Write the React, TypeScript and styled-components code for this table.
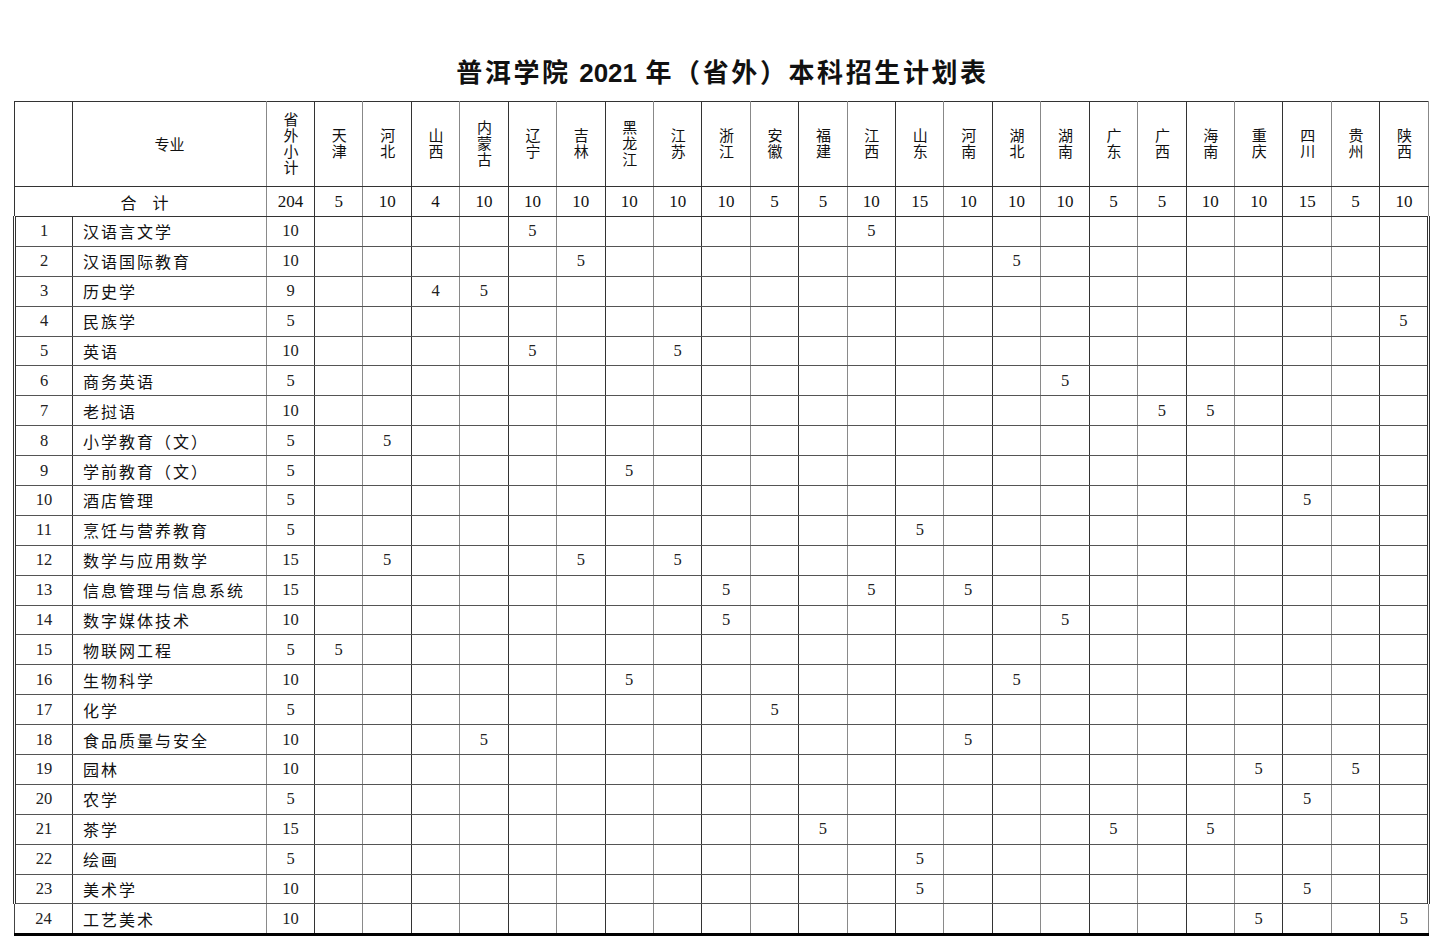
import React from 'react';
import styled, { createGlobalStyle } from 'styled-components';

const GlobalStyle = createGlobalStyle`
  html, body {
    margin: 0;
    padding: 0;
    background: #ffffff;
  }
`;

const provinces = [
  '天津', '河北', '山西', '内蒙古', '辽宁', '吉林', '黑龙江', '江苏', '浙江', '安徽', '福建', '江西',
  '山东', '河南', '湖北', '湖南', '广东', '广西', '海南', '重庆', '四川', '贵州', '陕西',
];

const totals = [5, 10, 4, 10, 10, 10, 10, 10, 10, 5, 5, 10, 15, 10, 10, 10, 5, 5, 10, 10, 15, 5, 10];

// 专业, 小计, { 省份: 人数 }
const rows: [string, number, Record<string, number>][] = [
  ['汉语言文学', 10, { 辽宁: 5, 江西: 5 }],
  ['汉语国际教育', 10, { 吉林: 5, 湖北: 5 }],
  ['历史学', 9, { 山西: 4, 内蒙古: 5 }],
  ['民族学', 5, { 陕西: 5 }],
  ['英语', 10, { 辽宁: 5, 江苏: 5 }],
  ['商务英语', 5, { 湖南: 5 }],
  ['老挝语', 10, { 广西: 5, 海南: 5 }],
  ['小学教育（文）', 5, { 河北: 5 }],
  ['学前教育（文）', 5, { 黑龙江: 5 }],
  ['酒店管理', 5, { 四川: 5 }],
  ['烹饪与营养教育', 5, { 山东: 5 }],
  ['数学与应用数学', 15, { 河北: 5, 吉林: 5, 江苏: 5 }],
  ['信息管理与信息系统', 15, { 浙江: 5, 江西: 5, 河南: 5 }],
  ['数字媒体技术', 10, { 浙江: 5, 湖南: 5 }],
  ['物联网工程', 5, { 天津: 5 }],
  ['生物科学', 10, { 黑龙江: 5, 湖北: 5 }],
  ['化学', 5, { 安徽: 5 }],
  ['食品质量与安全', 10, { 内蒙古: 5, 河南: 5 }],
  ['园林', 10, { 重庆: 5, 贵州: 5 }],
  ['农学', 5, { 四川: 5 }],
  ['茶学', 15, { 福建: 5, 广东: 5, 海南: 5 }],
  ['绘画', 5, { 山东: 5 }],
  ['美术学', 10, { 山东: 5, 四川: 5 }],
  ['工艺美术', 10, { 重庆: 5, 陕西: 5 }],
];

const cjk = `"Noto Sans CJK SC", "Noto Sans", sans-serif`;
const serif = `"Liberation Serif", "DejaVu Serif", "Noto Sans CJK SC", serif`;

const Page = styled.div`
  width: 1443px;
  padding-top: 52px;
`;

const Title = styled.h1`
  margin: 0 0 12px 0;
  height: 37px;
  text-align: center;
  font-family: ${cjk};
  font-weight: 700;
  font-size: 26px;
  line-height: 37px;
  letter-spacing: 2.6px;
  color: #111;
  padding-left: 2px;
`;

const Num = styled.span`
  font-family: "Liberation Sans", "Open Sans", sans-serif;
  font-weight: 700;
  letter-spacing: 0;
`;

const Table = styled.table`
  margin-left: 13px;
  width: 1415px;
  table-layout: fixed;
  border-collapse: collapse;
  color: #111;
`;

const HeadCell = styled.th<{ $light?: boolean }>`
  height: 84px;
  padding: 0;
  border: 1px solid #333;
  border-right-color: ${({ $light }) => ($light ? '#888' : '#333')};
  font-family: ${cjk};
  font-weight: 400;
  font-size: 15px;
  line-height: 16px;
  text-align: center;
  vertical-align: middle;
`;

// 竖排的表头文字
const Vertical = styled.span`
  display: inline-block;
  writing-mode: vertical-rl;
  text-orientation: upright;
  font-size: 15px;
  line-height: 16px;
  letter-spacing: 1px;
  padding-top: 1px;
`;

const TotalCell = styled.td<{ $light?: boolean }>`
  height: 29px;
  padding: 0;
  border: 1px solid #333;
  border-right-color: ${({ $light }) => ($light ? '#888' : '#333')};
  text-align: center;
  font-family: ${serif};
  font-size: 17px;
`;

const TotalLabel = styled(TotalCell)`
  font-family: ${cjk};
  font-size: 16px;
  padding-left: 8px;
`;

const Cell = styled.td<{ $light?: boolean; $last?: boolean; $edge?: 'left' | 'right' }>`
  height: 28.9px;
  padding: 0;
  border: 1px solid #444;
  border-right-color: ${({ $light }) => ($light ? '#8a8a8a' : '#333')};
  border-bottom: ${({ $last }) => ($last ? '3px solid #000' : '1px solid #555')};
  ${({ $edge }) => ($edge === 'left' ? 'border-left: 3px double #333;' : '')}
  ${({ $edge }) => ($edge === 'right' ? 'border-right: 3px double #333;' : '')}
  text-align: center;
  font-family: ${serif};
  font-size: 16.5px;
  color: #222;
`;

const MajorCell = styled(Cell)`
  text-align: left;
  padding-left: 10px;
  font-family: ${cjk};
  font-size: 16px;
  letter-spacing: 2px;
  color: #111;
  white-space: nowrap;
`;

const App: React.FC = () => {
  return (
    <Page>
      <GlobalStyle />
      <Title>
        普洱学院 <Num>2021</Num> 年（省外）本科招生计划表
      </Title>
      <Table>
        <colgroup>
          <col style={{ width: 58 }} />
          <col style={{ width: 194 }} />
          <col style={{ width: 48 }} />
          {provinces.map((p) => (
            <col key={p} style={{ width: 48.43 }} />
          ))}
        </colgroup>
        <thead>
          <tr>
            <HeadCell />
            <HeadCell $light>专业</HeadCell>
            <HeadCell>
              <Vertical>省外小计</Vertical>
            </HeadCell>
            {provinces.map((p, i) => (
              <HeadCell key={p} $light={i % 2 === 0}>
                <Vertical>{p}</Vertical>
              </HeadCell>
            ))}
          </tr>
        </thead>
        <tbody>
          <tr>
            <TotalLabel colSpan={2} $light>合&emsp;计</TotalLabel>
            <TotalCell>204</TotalCell>
            {totals.map((t, i) => (
              <TotalCell key={i} $light={i % 2 === 0}>{t}</TotalCell>
            ))}
          </tr>
          {rows.map(([major, sub, plan], r) => {
            const last = r === rows.length - 1;
            return (
              <tr key={major}>
                <Cell $last={last} $edge={last ? undefined : 'left'}>{r + 1}</Cell>
                <MajorCell $last={last} $light>{major}</MajorCell>
                <Cell $last={last}>{sub}</Cell>
                {provinces.map((p, i) => (
                  <Cell
                    key={p}
                    $last={last}
                    $light={i % 2 === 0}
                    $edge={!last && i === provinces.length - 1 ? 'right' : undefined}
                  >
                    {plan[p] ?? ''}
                  </Cell>
                ))}
              </tr>
            );
          })}
        </tbody>
      </Table>
    </Page>
  );
};

export default App;
